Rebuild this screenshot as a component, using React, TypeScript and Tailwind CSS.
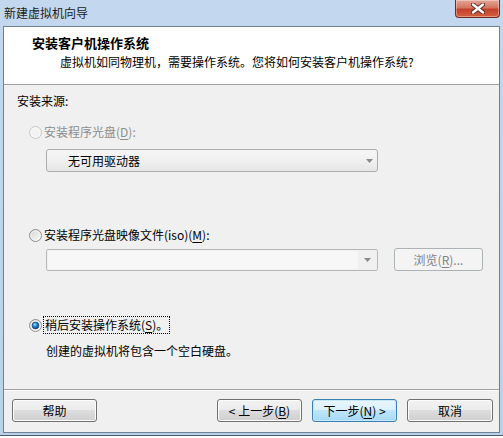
import React from "react";
import clsx from "clsx";

function Radio({ checked = false, disabled = false }: { checked?: boolean; disabled?: boolean }) {
  return (
    <svg width="13" height="13" viewBox="0 0 13 13" className="shrink-0">
      <defs>
        <linearGradient id="rfill" x1="0" y1="0" x2="1" y2="1">
          <stop offset="0" stopColor="#d2d2d2" />
          <stop offset="1" stopColor="#ffffff" />
        </linearGradient>
        <radialGradient id="rdot" cx="0.4" cy="0.35" r="0.7">
          <stop offset="0" stopColor="#9ee6ff" />
          <stop offset="0.45" stopColor="#1f86d8" />
          <stop offset="1" stopColor="#0b3a72" />
        </radialGradient>
      </defs>
      <circle
        cx="6.5"
        cy="6.5"
        r="6"
        fill={disabled ? "#f2f2f2" : "url(#rfill)"}
        stroke={disabled ? "#c8c8c8" : "#8e8f8f"}
      />
      <circle cx="6.5" cy="6.5" r="4.5" fill="none" stroke={disabled ? "#f8f8f8" : "#f4f4f4"} />
      {checked && <circle cx="6.5" cy="6.5" r="3.4" fill="url(#rdot)" stroke="#163f70" strokeWidth="0.7" />}
    </svg>
  );
}

function Arrow() {
  return (
    <svg width="7" height="4" viewBox="0 0 7 4">
      <path d="M0 0H7L3.5 4Z" fill="#8a8a8a" />
    </svg>
  );
}

function U({ children }: { children: React.ReactNode }) {
  return <span className="underline underline-offset-2">{children}</span>;
}

function Btn({ children, focused, disabled, className }: { children: React.ReactNode; focused?: boolean; disabled?: boolean; className?: string }) {
  return (
    <div
      className={clsx(
        "h-[23px] rounded-[3px] border flex items-center justify-center text-[12px] leading-4",
        disabled
          ? "border-[#adb2b5] bg-[#f4f4f4] text-[#838383]"
          : focused
          ? "border-[#3c7fb1] bg-[linear-gradient(to_bottom,#eaf6fd_0%,#d9f0fc_50%,#bee6fd_50%,#a7d9f5_100%)] shadow-[inset_0_0_0_1px_#c3e8fb] text-black"
          : "border-[#707070] bg-[linear-gradient(to_bottom,#f2f2f2_0%,#ebebeb_50%,#dddddd_50%,#cfcfcf_100%)] shadow-[inset_0_0_0_1px_#fcfcfc] text-black",
        className
      )}
    >
      {children}
    </div>
  );
}

export default function App() {
  return (
    <div className="w-[503px] h-[438px] flex flex-col overflow-hidden bg-[linear-gradient(to_bottom,#c3d8ee,#bad1ea)] font-['Noto_Sans_CJK_SC','Noto_Sans',sans-serif] text-[12px] leading-4 text-black">
      {/* title bar */}
      <div className="relative h-[26px] shrink-0 flex items-start pl-[4px] pt-[5px]">
        <span className="text-[12px] leading-4 text-[#1a1a1a]">新建虚拟机向导</span>
        <div className="absolute top-0 right-[3px] w-[45px] h-[18px] rounded-b-[4px] border border-t-0 border-[#6b2b22] bg-[linear-gradient(to_bottom,#e4a797_0%,#d4765f_45%,#c2412c_55%,#d6603f_100%)] flex items-center justify-center shadow-[inset_0_0_0_1px_rgba(255,255,255,0.35)]">
          <svg width="14" height="11" viewBox="0 0 14 11">
            <path d="M2 1.5L12 9.5M12 1.5L2 9.5" stroke="#5b2a22" strokeWidth="4.2" strokeLinecap="round" />
            <path d="M2 1.5L12 9.5M12 1.5L2 9.5" stroke="#ffffff" strokeWidth="2.4" strokeLinecap="round" />
          </svg>
        </div>
      </div>

      {/* client area */}
      <div className="ml-[3px] mr-[3px] h-[407px] shrink-0 border border-[#6f8094] flex flex-col bg-[#f0f0f0]">
        {/* header */}
        <div className="h-[57px] bg-white pt-[8px] shrink-0">
          <div className="pl-[28px] font-bold text-[13px] leading-4">安装客户机操作系统</div>
          <div className="pl-[56px] mt-[3px]">虚拟机如同物理机，需要操作系统。您将如何安装客户机操作系统?</div>
        </div>
        <div className="h-px bg-[#a0a0a0] shrink-0" />

        {/* body */}
        <div className="flex-1 flex flex-col">
          <div className="pl-[13px] pt-[8px]">安装来源:</div>

          <div className="pl-[25px] mt-[15px] flex items-center gap-[2px] text-[#8d8d8d]">
            <Radio disabled />
            <span>
              安装程序光盘(<U>D</U>):
            </span>
          </div>
          <div className="ml-[42px] mt-[9px] w-[332px] h-[23px] rounded-[3px] border border-[#adadad] bg-[linear-gradient(to_bottom,#f6f6f6_0%,#f0f0f0_50%,#e6e6e6_100%)] flex items-center pl-[21px] pr-[4px]">
            <span className="flex-1">无可用驱动器</span>
            <Arrow />
          </div>

          <div className="pl-[25px] mt-[55px] flex items-center gap-[2px]">
            <Radio />
            <span>
              安装程序光盘映像文件(iso)(<U>M</U>):
            </span>
          </div>
          <div className="ml-[42px] mt-[5px] flex items-start gap-[16px]">
            <div className="mt-px w-[332px] h-[22px] rounded-[2px] border border-[#b8b8b8] bg-[#f0f0f0] flex items-stretch p-px">
              <div className="flex-1 bg-[#f7f7f7]" />
              <div className="w-[18px] flex items-center justify-center">
                <Arrow />
              </div>
            </div>
            <Btn disabled className="w-[89px] h-[22px]">
              浏览(<U>R</U>)...
            </Btn>
          </div>

          <div className="pl-[25px] mt-[46px] flex items-center gap-[2px]">
            <Radio checked />
            <span className="outline outline-1 outline-dotted outline-black px-px">
              稍后安装操作系统(<U>S</U>)。
            </span>
          </div>
          <div className="pl-[42px] mt-[10px]">创建的虚拟机将包含一个空白硬盘。</div>

          {/* footer */}
          <div className="mt-auto">
            <div className="h-px bg-[#a0a0a0]" />
            <div className="h-px bg-white" />
            <div className="flex items-center pl-[8px] pr-[6px] pt-[8px] pb-[10px]">
              <Btn className="w-[85px]">帮助</Btn>
              <div className="flex-1" />
              <Btn className="w-[85px]">
                &lt; 上一步(<U>B</U>)
              </Btn>
              <Btn focused className="w-[85px] ml-[10px]">
                下一步(<U>N</U>) &gt;
              </Btn>
              <Btn className="w-[86px] ml-[10px]">取消</Btn>
            </div>
          </div>
        </div>
      </div>

      {/* bottom frame */}
      <div className="h-[2px] shrink-0" />
      <div className="h-px bg-[#4b5a6c] shrink-0" />
      <div className="flex-1 bg-white" />
    </div>
  );
}
